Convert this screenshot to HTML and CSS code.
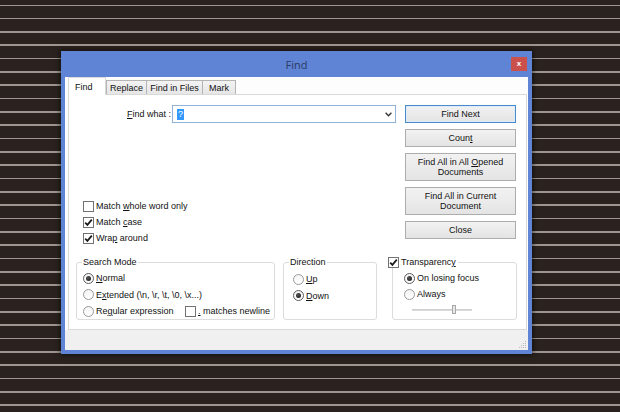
FILE: index.html
```html
<!DOCTYPE html>
<html>
<head>
    <meta charset="utf-8">
    <link rel="stylesheet" href="styles.css">
</head>
<body>
<div class="desktop">
    <div class="window">
        <div class="titlebar">
            <span></span>
            <span class="title">Find</span>
            <span class="close">x</span>
        </div>
        <div class="client">
            <div class="tabs">
                <div class="tab tab-active">Find</div>
                <div class="tab tab-replace">Replace</div>
                <div class="tab tab-files">Find in Files</div>
                <div class="tab tab-mark">Mark</div>
            </div>
            <div class="panel">
                <div class="top">
                    <div class="left">
                        <div class="find-row">
                            <span class="find-label"><u>F</u>ind what :</span>
                            <div class="combo">
                                <span class="sel">?</span>
                                <svg class="arrow" width="7" height="5" viewBox="0 0 7 5"><path d="M0.6 0.8 L3.5 3.8 L6.4 0.8" fill="none" stroke="#333" stroke-width="1.3"/></svg>
                            </div>
                        </div>
                        <div class="checks">
                            <div class="opt"><span class="check"></span><span>Match <u>w</u>hole word only</span></div>
                            <div class="opt"><span class="check"><svg width="9" height="9" viewBox="0 0 9 9"><path d="M1.2 4.6 L3.4 6.9 L7.8 1.6" fill="none" stroke="#1a1a1a" stroke-width="1.7"/></svg></span><span>Match <u>c</u>ase</span></div>
                            <div class="opt"><span class="check"><svg width="9" height="9" viewBox="0 0 9 9"><path d="M1.2 4.6 L3.4 6.9 L7.8 1.6" fill="none" stroke="#1a1a1a" stroke-width="1.7"/></svg></span><span>Wra<u>p</u> around</span></div>
                        </div>
                    </div>
                    <div class="buttons">
                        <div class="btn btn-default"><span>Find Next</span></div>
                        <div class="btn"><span>Coun<u>t</u></span></div>
                        <div class="btn btn-tall"><span>Find All in All <u>O</u>pened<br>Documents</span></div>
                        <div class="btn btn-tall"><span>Find All in Current<br>Document</span></div>
                        <div class="btn"><span>Close</span></div>
                    </div>
                </div>
                <div class="groups">
                    <div class="group group-mode">
                        <span class="group-label">Search Mode</span>
                        <div class="opt"><span class="radio on"></span><span><u>N</u>ormal</span></div>
                        <div class="opt"><span class="radio"></span><span>E<u>x</u>tended (\n, \r, \t, \0, \x...)</span></div>
                        <div class="opt"><span class="radio"></span><span class="regex-text">Re<u>g</u>ular expression</span><span class="check"></span><span><u>.</u> matches newline</span></div>
                    </div>
                    <div class="group group-dir">
                        <span class="group-label">Direction</span>
                        <div class="opt"><span class="radio"></span><span><u>U</u>p</span></div>
                        <div class="opt"><span class="radio on"></span><span><u>D</u>own</span></div>
                    </div>
                    <div class="group group-trans">
                        <span class="group-label trans-label"><span class="check"><svg width="9" height="9" viewBox="0 0 9 9"><path d="M1.2 4.6 L3.4 6.9 L7.8 1.6" fill="none" stroke="#1a1a1a" stroke-width="1.7"/></svg></span><span>Transparenc<u>y</u></span></span>
                        <div class="opt"><span class="radio on"></span><span>On losing focus</span></div>
                        <div class="opt"><span class="radio"></span><span>Always</span></div>
                        <div class="slider-row"><div class="slider"><span class="thumb"></span></div></div>
                    </div>
                </div>
            </div>
            <div class="statusbar">
                <svg class="grip" width="9" height="9" viewBox="0 0 9 9">
                    <rect x="7" y="1" width="1" height="1" fill="#b8b8b8"/>
                    <rect x="5" y="3" width="1" height="1" fill="#b8b8b8"/>
                    <rect x="7" y="3" width="1" height="1" fill="#b8b8b8"/>
                    <rect x="3" y="5" width="1" height="1" fill="#b8b8b8"/>
                    <rect x="5" y="5" width="1" height="1" fill="#b8b8b8"/>
                    <rect x="7" y="5" width="1" height="1" fill="#b8b8b8"/>
                    <rect x="1" y="7" width="1" height="1" fill="#b8b8b8"/>
                    <rect x="3" y="7" width="1" height="1" fill="#b8b8b8"/>
                    <rect x="5" y="7" width="1" height="1" fill="#b8b8b8"/>
                    <rect x="7" y="7" width="1" height="1" fill="#b8b8b8"/>
                </svg>
            </div>
        </div>
    </div>
</div>
</body>
</html>
```

FILE: styles.css
```css
* {
    box-sizing: border-box;
}

body {
    margin: 0;
    width: 620px;
    height: 412px;
    overflow: hidden;
    background-color: #2a221e;
    background-image: repeating-linear-gradient(to bottom, #2a221e 0, #2a221e 4.5px, #9d958e 4.5px, #9d958e 5.9px, #2a221e 5.9px, #2a221e 13.333px);
    font-family: "Liberation Sans", Arial, sans-serif;
    font-size: 9px;
    color: #111;
}

u {
    text-decoration: underline;
    text-underline-offset: 1px;
}

.desktop {
    padding: 51px 0 0 61px;
}

.window {
    width: 471px;
    height: 303px;
    padding: 0 4px 4px 4px;
    background-color: #5f84d6;
    box-shadow: 0 0 5px 1px rgba(0, 0, 0, 0.55);
    display: flex;
    flex-direction: column;
}

.titlebar {
    height: 26px;
    display: grid;
    grid-template-columns: 1fr auto 1fr;
    align-items: center;
}

.title {
    font-family: "Open Sans", sans-serif;
    font-size: 11px;
    color: #2b3a63;
}

.close {
    justify-self: end;
    margin-right: 1px;
    width: 16px;
    height: 14px;
    background-color: #c9504b;
    color: #fff;
    font-size: 8px;
    font-weight: bold;
    line-height: 13px;
    text-align: center;
}

.client {
    flex: 1;
    background-color: #fdfdfd;
    display: flex;
    flex-direction: column;
}

/* tab strip */

.tabs {
    height: 17px;
    display: flex;
    align-items: flex-end;
    padding-left: 3px;
}

.tab {
    height: 14px;
    border: 1px solid #b4b4b4;
    border-bottom: none;
    background: linear-gradient(#f3f3f3, #e6e6e6);
    display: flex;
    align-items: center;
    justify-content: center;
    margin-left: -1px;
}

.tab-active {
    position: relative;
    z-index: 1;
    height: 18px;
    width: 38px;
    margin-left: 0;
    margin-bottom: -1px;
    justify-content: flex-start;
    padding-left: 6px;
    background: #fff;
    border-color: #d9d9d9;
}

.tab-replace {
    width: 41px;
    margin-left: 0;
}

.tab-files {
    width: 57px;
}

.tab-mark {
    width: 34px;
}

/* page */

.panel {
    width: 459px;
    height: 236px;
    margin-left: 3px;
    border: 1px solid #d9d9d9;
    background-color: #fff;
    padding-top: 10px;
}

.top {
    display: flex;
    height: 152px;
}

.left {
    width: 336px;
}

.find-row {
    display: flex;
    align-items: center;
    height: 18px;
}

.find-label {
    width: 103px;
    text-align: right;
    padding-right: 1px;
}

.combo {
    width: 224px;
    height: 18px;
    border: 1px solid #8fb1da;
    background-color: #fff;
    display: flex;
    align-items: center;
    justify-content: space-between;
    padding: 0 3px 0 4px;
}

.sel {
    background-color: #3399ff;
    color: #fff;
    line-height: 11px;
    padding: 0 1px;
}

.checks {
    margin-top: 75px;
    padding-left: 14px;
}

.opt {
    display: flex;
    align-items: center;
    height: 16px;
    white-space: nowrap;
}

.check {
    width: 11px;
    height: 11px;
    border: 1px solid #727272;
    background-color: #fff;
    margin-right: 2px;
    display: inline-flex;
    align-items: center;
    justify-content: center;
    flex-shrink: 0;
}

.radio {
    width: 11px;
    height: 11px;
    border: 1px solid #9a9a9a;
    border-radius: 50%;
    background: linear-gradient(#f4f4f4, #ffffff);
    margin-right: 2px;
    display: inline-flex;
    align-items: center;
    justify-content: center;
    flex-shrink: 0;
}

.radio.on {
    border-color: #5c5c5c;
}

.radio.on::after {
    content: "";
    width: 5px;
    height: 5px;
    border-radius: 50%;
    background: radial-gradient(circle at 40% 35%, #555, #111);
}

/* buttons column */

.buttons {
    width: 111px;
    display: flex;
    flex-direction: column;
    gap: 6px;
}

.btn {
    height: 18px;
    border: 1px solid #adadad;
    background: linear-gradient(#f2f2f2, #e4e4e4);
    display: flex;
    align-items: center;
    justify-content: center;
    text-align: center;
    line-height: 10.5px;
}

.btn-default {
    border-color: #4a8cc8;
    box-shadow: inset 0 0 0 1px #dcecfc;
}

.btn-tall {
    height: 28px;
}

/* group boxes */

.groups {
    display: flex;
    margin-top: 5px;
    padding-left: 7px;
}

.group {
    position: relative;
    height: 58px;
    border: 1px solid #dcdcdc;
    border-radius: 3px;
}

.group-label {
    position: absolute;
    top: -7px;
    left: 5px;
    line-height: 12px;
    padding: 0 1px;
    background-color: #fff;
    display: flex;
    align-items: center;
}

.group-mode {
    width: 199px;
    margin-right: 8px;
    padding: 7px 0 0 6px;
}

.group-mode .opt,
.group-dir .opt {
    height: 16.5px;
}

.regex-text {
    width: 89px;
}

.group-dir {
    width: 94px;
    margin-right: 15px;
    padding: 8px 0 0 9px;
}

.group-trans {
    width: 125px;
    padding: 7px 0 0 11px;
}

.trans-label {
    left: -6px;
    top: -7px;
    padding-right: 2px;
}

.slider-row {
    height: 16px;
    display: flex;
    align-items: center;
    padding-left: 8px;
}

.slider {
    position: relative;
    width: 60px;
    height: 2px;
    background-color: #dadada;
    border-top: 1px solid #cfcfcf;
}

.thumb {
    position: absolute;
    left: 40px;
    top: -5px;
    width: 4px;
    height: 9px;
    border: 1px solid #a8a8a8;
    background-color: #e8e8e8;
}

.statusbar {
    flex: 1;
    background-color: #f0f0f0;
    display: flex;
    justify-content: flex-end;
    align-items: flex-end;
    padding: 0 1px 1px 0;
}
```
